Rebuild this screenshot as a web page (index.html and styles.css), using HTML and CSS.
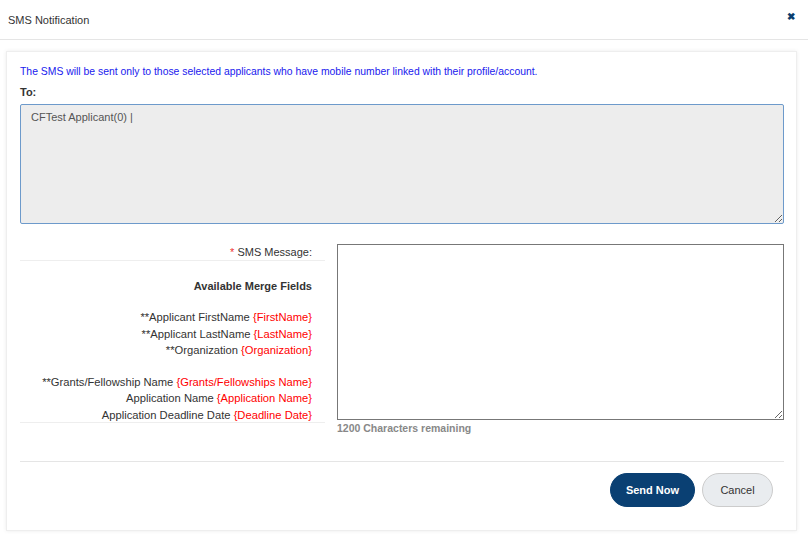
FILE: index.html
```html
<!DOCTYPE html>
<html lang="en">
<head>
    <meta charset="UTF-8">
    <meta name="viewport" content="width=device-width, initial-scale=1.0">
    <title>SMS Notification</title>
    <link rel="stylesheet" href="styles.css">
</head>
<body>
    <div id="modal">
        <div class="modal-header">
            <span class="modal-title">SMS Notification</span>
            <span class="close">&#10006;</span>
        </div>

        <div class="modal-body">
            <div class="card">
                <p class="info">The SMS will be sent only to those selected applicants who have mobile number linked with their profile/account.</p>

                <label class="to-label" for="toList">To:</label>
                <textarea id="toList" class="to-box" readonly>CFTest Applicant(0) |</textarea>

                <div class="message-row">
                    <div class="merge-col">
                        <div class="msg-label"><span class="req">*</span> SMS Message:</div>
                        <div class="merge-list">
                            <div class="merge-title">Available Merge Fields</div>
                            <div>**Applicant FirstName <span class="field">{FirstName}</span></div>
                            <div>**Applicant LastName <span class="field">{LastName}</span></div>
                            <div>**Organization <span class="field">{Organization}</span></div>
                            <div class="spacer"></div>
                            <div>**Grants/Fellowship Name <span class="field">{Grants/Fellowships Name}</span></div>
                            <div>Application Name <span class="field">{Application Name}</span></div>
                            <div>Application Deadline Date <span class="field">{Deadline Date}</span></div>
                        </div>
                    </div>
                    <div class="message-col">
                        <textarea id="smsMessage" class="msg-box"></textarea>
                        <div class="remaining">1200 Characters remaining</div>
                    </div>
                </div>

                <div class="actions">
                    <button class="btn btn-send">Send Now</button>
                    <button class="btn btn-cancel">Cancel</button>
                </div>
            </div>
        </div>
    </div>
</body>
</html>
```

FILE: styles.css
```css
body {
    font-family: "Liberation Sans", Arial, sans-serif;
    font-size: 11px;
    color: #333;
    background-color: #fff;
    margin: 0;
    padding: 0;
}

.modal-header {
    display: flex;
    justify-content: space-between;
    align-items: center;
    height: 40px;
    padding: 0 13px 0 8px;
    border-bottom: 1px solid #e5e5e5;
    box-sizing: border-box;
}

.modal-title {
    font-size: 11px;
    color: #333;
}

.close {
    font-size: 10px;
    color: #0a3d6e;
    font-weight: bold;
    margin-top: -6px;
}

.modal-body {
    padding: 11px 11px 8px 6px;
}

.card {
    border: 1px solid #eee;
    box-shadow: 0 0 4px rgba(0, 0, 0, 0.08);
    padding: 13px 12px 23px 13px;
}

.info {
    color: #2020ee;
    font-size: 10.4px;
    margin: 0 0 6px 0;
    line-height: 14px;
}

.to-label {
    display: block;
    font-weight: bold;
    font-size: 11px;
    line-height: 14px;
    margin-bottom: 5px;
}

.to-box {
    display: block;
    width: 100%;
    height: 120px;
    box-sizing: border-box;
    background-color: #ededed;
    border: 1px solid #6d9acb;
    border-radius: 2px;
    padding: 6px 10px;
    font-family: "Liberation Sans", Arial, sans-serif;
    font-size: 11px;
    color: #555;
    resize: vertical;
    margin: 0;
}

.message-row {
    display: flex;
    gap: 12px;
    margin-top: 20px;
}

.merge-col {
    width: 305px;
    flex: none;
    text-align: right;
    color: #333;
}

.msg-label {
    line-height: 16px;
    padding: 0 13px 0 0;
    border-bottom: 1px solid #eee;
}

.req {
    color: #e33;
}

.merge-list {
    font-size: 11.2px;
    height: 144px;
    padding: 17px 13px 0 0;
    line-height: 16.3px;
    border-bottom: 1px solid #eee;
}

.merge-title {
    font-size: 11px;
    font-weight: bold;
    margin-bottom: 15px;
}

.spacer {
    height: 16px;
}

.field {
    color: #f00;
}

.message-col {
    flex: 1;
}

.msg-box {
    display: block;
    width: 100%;
    height: 176px;
    box-sizing: border-box;
    border: 1px solid #777;
    margin: 0;
    resize: vertical;
    font-family: "Liberation Sans", Arial, sans-serif;
}

.remaining {
    color: #888;
    font-weight: bold;
    font-size: 10.5px;
    line-height: 17px;
}

.actions {
    display: flex;
    justify-content: flex-end;
    gap: 7px;
    margin-top: 24px;
    padding: 11px 11px 0 0;
    border-top: 1px solid #e5e5e5;
}

.btn {
    height: 34px;
    border-radius: 17px;
    font-family: "Liberation Sans", Arial, sans-serif;
    font-size: 11px;
    cursor: pointer;
}

.btn-send {
    width: 85px;
    background-color: #0a4073;
    color: #fff;
    font-weight: bold;
    border: 1px solid #0a4073;
}

.btn-cancel {
    width: 71px;
    background-color: #e9ecef;
    color: #333;
    border: 1px solid #ccc;
}
```
